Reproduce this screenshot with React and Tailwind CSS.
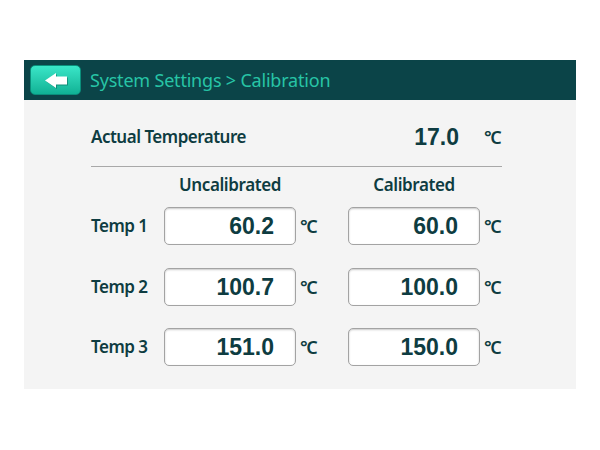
import React from 'react'

const rows = [
  { name: 'Temp 1', raw: '60.2', cal: '60.0', gap: 'mt-[12px]' },
  { name: 'Temp 2', raw: '100.7', cal: '100.0', gap: 'mt-[23px]' },
  { name: 'Temp 3', raw: '151.0', cal: '150.0', gap: 'mt-[22px]' },
]

const BackArrow = () => (
  <svg width="22" height="15" viewBox="0 0 22 15" className="drop-shadow-[1px_1px_0_rgba(0,80,70,0.45)]">
    <polygon points="0,7.5 11,0 11,3.5 22,3.5 22,11.5 11,11.5 11,15" fill="#ffffff" />
  </svg>
)

const ValueBox = ({ value }) => (
  <div className="h-[38px] w-[132px] rounded-[5px] border border-[#a3a3a3] bg-white shadow-[inset_0_1px_2px_rgba(0,0,0,0.22)] flex items-center justify-end pr-[21px] font-['Liberation_Sans',sans-serif] font-bold text-[23px] text-[#0e3c41]">
    {value}
  </div>
)

const Unit = () => (
  <span className="pl-[4px] font-['Noto_Sans',sans-serif] text-[18px] font-semibold text-[#0e3c41] tracking-[-1.5px]">°C</span>
)

export default function App() {
  return (
    <div className="w-[600px] h-[450px] bg-white pt-[60px] px-[24px]">
      <div className="w-[552px] h-[329px] bg-[#f4f4f4] flex flex-col">
        {/* header bar */}
        <div className="h-[40px] bg-[#0b4448] flex items-center pl-[6px]">
          <button className="w-[51px] h-[30px] rounded-[5px] border border-[#0a8f7b] bg-gradient-to-b from-[#39e6c8] to-[#0fb295] flex items-center justify-center">
            <BackArrow />
          </button>
          <span className="ml-[9px] font-['Noto_Sans',sans-serif] text-[18px] text-[#27c4a6] tracking-[-0.2px]">
            System Settings &gt; Calibration
          </span>
        </div>

        <div className="pl-[67px] flex flex-col font-['Noto_Sans',sans-serif] text-[#0e3c41]">
          <div className="mt-[25px] h-[24px] flex items-center">
            <span className="w-[257px] font-semibold text-[17px] tracking-[-0.5px]">Actual Temperature</span>
            <span className="w-[132px] pr-[21px] text-right font-['Liberation_Sans',sans-serif] font-bold text-[23px]">17.0</span>
            <Unit />
          </div>

          <div className="mt-[17px] h-px w-[411px] bg-[#a8a8a8]" />

          <div className="mt-[8px] h-[20px] flex items-center font-semibold text-[17px] tracking-[-0.4px]">
            <span className="ml-[73px] w-[132px] text-center">Uncalibrated</span>
            <span className="ml-[52px] w-[132px] text-center">Calibrated</span>
          </div>

          {rows.map((r) => (
            <div key={r.name} className={`${r.gap} flex items-center`}>
              <span className="w-[73px] font-semibold text-[17px] tracking-[-0.5px]">{r.name}</span>
              <ValueBox value={r.raw} />
              <span className="w-[52px]"><Unit /></span>
              <ValueBox value={r.cal} />
              <Unit />
            </div>
          ))}
        </div>
      </div>
    </div>
  )
}
